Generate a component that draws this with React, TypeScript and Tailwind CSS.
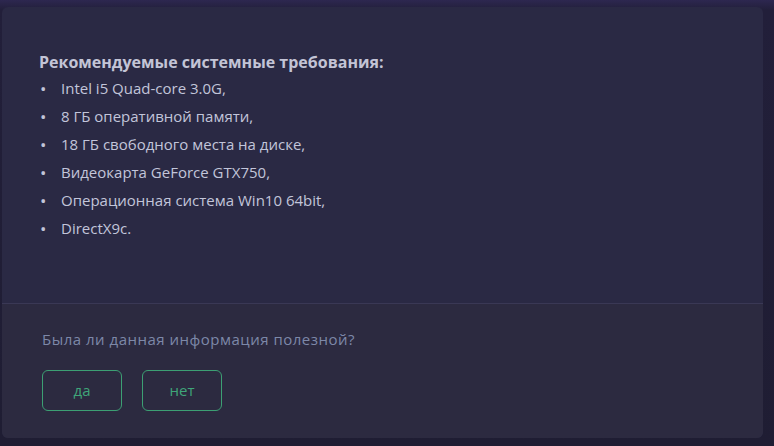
const items = [
  "Intel i5 Quad-core 3.0G,",
  "8 ГБ оперативной памяти,",
  "18 ГБ свободного места на диске,",
  "Видеокарта GeForce GTX750,",
  "Операционная система Win10 64bit,",
  "DirectX9c.",
];

export default function App() {
  return (
    <div
      className="h-[446px] w-[774px] overflow-hidden bg-[linear-gradient(180deg,#2d2750_0px,#221f3a_10px,#1f1d33_100%)] pl-[2px] pt-[7px]"
      style={{ fontFamily: '"Open Sans", "Noto Sans", sans-serif' }}
    >
      <div className="flex h-[431px] w-[761px] flex-col overflow-hidden rounded-[6px] bg-[#2a2944]">
        {/* requirements */}
        <div className="h-[297px] border-b border-[#3a3855] pl-[37px] pt-[44px]">
          <h3 className="text-[16px] font-bold leading-[22px] text-[#c3c4d6]">
            Рекомендуемые системные требования:
          </h3>
          <ul className="mt-[1px]">
            {items.map((t) => (
              <li key={t} className="flex h-[28px] items-center text-[15px] text-[#c2c5da]">
                <span className="w-[22px] pl-[1px] text-[17px] leading-none">•</span>
                {t}
              </li>
            ))}
          </ul>
        </div>

        {/* feedback */}
        <div className="flex-1 bg-[#2c2a40] pl-[40px] pt-[24px]">
          <p className="text-[15px] leading-[22px] tracking-[0.5px] text-[#7d88a8]">
            Была ли данная информация полезной?
          </p>
          <div className="mt-[20px] flex gap-[20px]">
            <button className="h-[41px] w-[80px] rounded-[6px] border border-[#3c9f73] text-[15px] text-[#3fa579]">
              да
            </button>
            <button className="h-[41px] w-[80px] rounded-[6px] border border-[#3c9f73] text-[15px] text-[#3fa579]">
              нет
            </button>
          </div>
        </div>
      </div>
    </div>
  );
}
